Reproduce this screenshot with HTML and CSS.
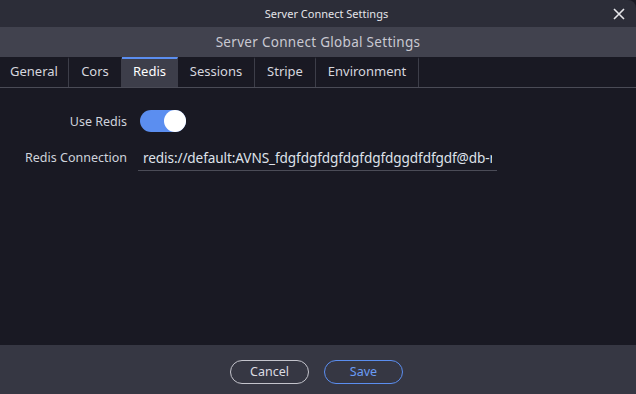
FILE: index.html
```html
<!DOCTYPE html>
<html lang="en">
<head>
    <meta charset="UTF-8">
    <title>Server Connect Settings</title>
    <link rel="stylesheet" href="styles.css">
</head>
<body>
    <div class="dialog">
        <div class="titlebar">
            <span class="title">Server Connect Settings</span>
            <button class="close-btn" aria-label="Close">
                <svg width="12" height="12" viewBox="0 0 12 12">
                    <path d="M1 1 L11 11 M11 1 L1 11" stroke="#e6e6ea" stroke-width="1.6" fill="none"/>
                </svg>
            </button>
        </div>

        <div class="subheader">Server Connect Global Settings</div>

        <div class="tabs">
            <div class="tab">General</div>
            <div class="tab">Cors</div>
            <div class="tab active">Redis</div>
            <div class="tab">Sessions</div>
            <div class="tab">Stripe</div>
            <div class="tab">Environment</div>
        </div>

        <div class="content">
            <div class="form-row">
                <label class="form-label">Use Redis</label>
                <div class="toggle on"><span class="knob"></span></div>
            </div>
            <div class="form-row">
                <label class="form-label" for="conn">Redis Connection</label>
                <input class="text-input" id="conn" type="text" value="redis://default:AVNS_fdgfdgfdgfdgfdgfdggdfdfgdf@db-redis-fra1-12345.b.db.ondigitalocean.com:25061">
            </div>
        </div>

        <div class="footer">
            <button class="btn btn-cancel">Cancel</button>
            <button class="btn btn-save">Save</button>
        </div>
    </div>
</body>
</html>
```

FILE: styles.css
```css
* {
    margin: 0;
    padding: 0;
    box-sizing: border-box;
}

html, body {
    height: 100%;
}

body {
    font-family: "Noto Sans", "Open Sans", sans-serif;
    background: #1a1a24;
    overflow: hidden;
}

.dialog {
    height: 100%;
    display: flex;
    flex-direction: column;
    background: #191923;
}

.titlebar {
    height: 27px;
    background: #2c2d38;
    display: flex;
    align-items: center;
    justify-content: center;
    position: relative;
    border-top-right-radius: 8px;
}

.title {
    color: #e4e4e8;
    font-size: 11px;
    padding-left: 17px;
}

.close-btn {
    position: absolute;
    right: 10px;
    top: 7px;
    width: 14px;
    height: 14px;
    background: none;
    border: none;
    display: flex;
    align-items: center;
    justify-content: center;
}

.subheader {
    height: 30px;
    background: #41424e;
    color: #c9c9d2;
    font-size: 13.5px;
    display: flex;
    align-items: center;
    justify-content: center;
    letter-spacing: 0.3px;
}

.tabs {
    display: flex;
    height: 31px;
    background: #191923;
    border-bottom: 1px solid #4a4b56;
}

.tab {
    color: #d6d6de;
    font-size: 13px;
    display: flex;
    align-items: center;
    justify-content: center;
    border-right: 1px solid #3d3e49;
    border-top: 2px solid transparent;
    padding-bottom: 4px;
}

.tab:nth-child(1) { width: 69px; }
.tab:nth-child(2) { width: 53px; }
.tab:nth-child(3) { width: 56px; }
.tab:nth-child(4) { width: 77px; }
.tab:nth-child(5) { width: 61px; }
.tab:nth-child(6) { width: 103px; }

.tab.active {
    background: #3d3e4a;
    border-top-color: #5b8ef0;
    border-right-color: transparent;
    color: #ffffff;
}

.content {
    flex: 1;
    padding-top: 21px;
}

.form-row {
    display: flex;
    align-items: center;
    height: 24px;
    margin-bottom: 12px;
}

.form-label {
    width: 128px;
    text-align: right;
    color: #cfd3dc;
    font-size: 12.5px;
    padding-right: 1px;
}

.toggle {
    margin-left: 12px;
    width: 46px;
    height: 22px;
    border-radius: 11px;
    background: #5b8ef0;
    position: relative;
}

.toggle .knob {
    position: absolute;
    right: 0;
    top: 0;
    width: 22px;
    height: 22px;
    border-radius: 50%;
    background: #ffffff;
}

.text-input {
    margin-left: 10px;
    width: 359px;
    height: 26px;
    background: transparent;
    border: none;
    border-bottom: 1px solid #4b4c57;
    color: #dfe2ea;
    font-family: "Noto Sans", "Open Sans", sans-serif;
    font-size: 13.6px;
    letter-spacing: -0.1px;
    padding: 0 5px;
    margin-top: 2px;
    outline: none;
}

.footer {
    height: 49px;
    background: #363743;
    display: flex;
    align-items: center;
    justify-content: center;
    gap: 15px;
    padding-top: 4px;
    padding-right: 3px;
}

.btn {
    width: 79px;
    height: 24px;
    border-radius: 12px;
    background: transparent;
    font-family: "Noto Sans", "Open Sans", sans-serif;
    font-size: 12.5px;
}

.btn-cancel {
    border: 1px solid #c4c4cc;
    color: #dcdce2;
}

.btn-save {
    border: 1px solid #5b8ef0;
    color: #6a9bf5;
}
```
